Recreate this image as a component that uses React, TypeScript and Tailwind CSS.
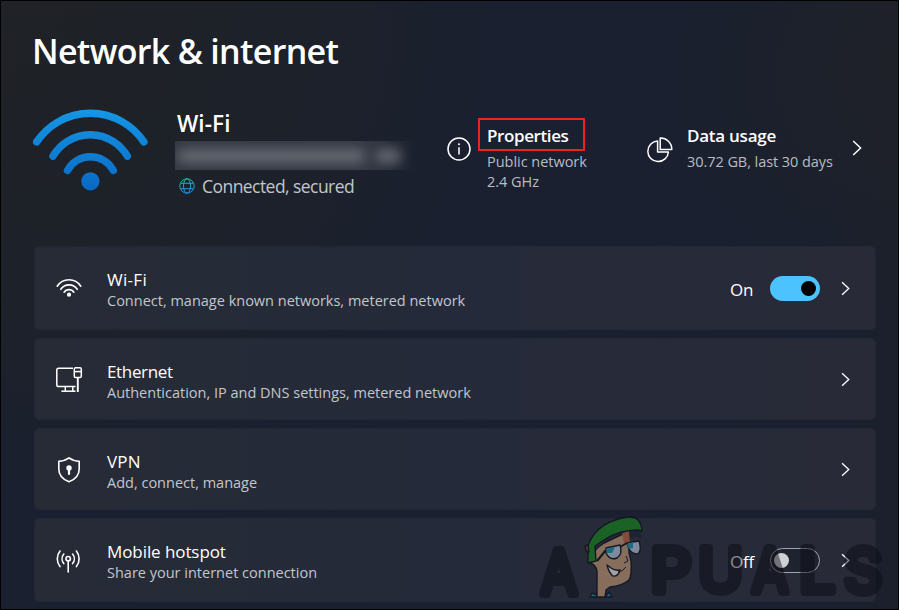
import React from "react";

const Chevron = ({ className = "" }: { className?: string }) => (
  <svg viewBox="0 0 10 16" className={className} fill="none" stroke="#fff" strokeWidth="1.5">
    <path d="M1.2 1 L8.6 8 L1.2 15" />
  </svg>
);

const BigWifi = () => (
  <svg width="116" height="82" viewBox="0 0 116 82" className="shrink-0">
    <defs>
      <linearGradient id="sky" gradientUnits="userSpaceOnUse" x1="0" y1="0" x2="0" y2="82">
        <stop offset="0" stopColor="#1597e5" />
        <stop offset="1" stopColor="#0968c3" />
      </linearGradient>
    </defs>
    <g fill="none" stroke="url(#sky)" strokeWidth="7.4" strokeLinecap="round">
      <path d="M3.7 32.9 A64.5 64.5 0 0 1 110.9 32.9" />
      <path d="M20 47.2 A43 43 0 0 1 94.4 47.2" />
      <path d="M34.5 61.4 A26 26 0 0 1 80.3 61.4" />
    </g>
    <circle cx="57.4" cy="72.3" r="9.1" fill="url(#sky)" />
  </svg>
);

const Globe = () => (
  <svg width="16" height="16" viewBox="0 0 16 16" fill="none" stroke="url(#globe)" strokeWidth="1">
    <defs>
      <linearGradient id="globe" gradientUnits="userSpaceOnUse" x1="0" y1="0" x2="3" y2="16">
        <stop offset="0" stopColor="#1fbf9c" />
        <stop offset="1" stopColor="#2191e6" />
      </linearGradient>
    </defs>
    <circle cx="8" cy="8" r="7.2" />
    <ellipse cx="8" cy="8" rx="3.5" ry="7.2" />
    <path d="M1.6 5.3 H14.4 M1.6 10.7 H14.4" />
  </svg>
);

const InfoIcon = () => (
  <svg width="24" height="24" viewBox="0 0 24 24" fill="none" stroke="#fff" strokeWidth="1.5">
    <circle cx="12" cy="12" r="11" />
    <path d="M12 10.2 V17.5" />
    <circle cx="12" cy="7.3" r="1" fill="#fff" stroke="none" />
  </svg>
);

const PieIcon = () => (
  <svg width="26" height="26" viewBox="0 0 26 26" fill="none" stroke="#fff" strokeWidth="1.5" strokeLinejoin="round">
    <path d="M10.6 4 A10.3 10.3 0 1 0 21.4 15 H10.6 Z" />
    <path d="M13.2 1 A11.2 11.2 0 0 1 24.8 12.4 H13.2 Z" />
  </svg>
);

const WifiIcon = () => (
  <svg width="28" height="28" viewBox="0 0 28 28" fill="none" stroke="#fff" strokeWidth="1.6" strokeLinecap="round">
    <path d="M2.2 12.2 A14 14 0 0 1 25.8 12.2" />
    <path d="M5.8 15.3 A9.8 9.8 0 0 1 22.2 15.3" />
    <path d="M9.1 18.2 A5.9 5.9 0 0 1 18.9 18.2" />
    <circle cx="14" cy="20.7" r="2.1" fill="#fff" stroke="none" />
  </svg>
);

const EthernetIcon = () => (
  <svg width="28" height="28" viewBox="0 0 28 28" fill="none" stroke="#fff" strokeWidth="1.5" strokeLinejoin="round">
    <path d="M18 2.2 H3.5 Q1.8 2.2 1.8 4 V18.8 Q1.8 20.6 3.5 20.6 H20.5" />
    <path d="M10.3 20.6 V25.2 M17.8 20.6 V25.2" />
    <path d="M6.4 25.2 H20.5" />
    <rect x="19.3" y="1.8" width="7" height="9.8" rx="1.4" />
    <path d="M19.5 5.6 H26.2" />
    <path d="M22.8 11.8 V26" strokeWidth="1.9" />
  </svg>
);

const ShieldIcon = () => (
  <svg width="28" height="28" viewBox="0 0 28 28" fill="none" stroke="#fff" strokeWidth="1.6" strokeLinejoin="round">
    <path d="M14 1.8 C11 4 7.5 5 3.8 5.2 V13 C3.8 19 7.5 23.3 14 25.8 C20.5 23.3 24.2 19 24.2 13 V5.2 C20.5 5 17 4 14 1.8 Z" />
    <circle cx="14" cy="12" r="2.7" fill="#fff" stroke="none" />
    <path d="M14 12.5 V18" strokeWidth="2.2" strokeLinecap="round" />
  </svg>
);

const HotspotIcon = () => (
  <svg width="28" height="28" viewBox="0 0 28 28" fill="none" stroke="#fff" strokeWidth="1.6" strokeLinecap="round">
    <g transform="translate(0 2)">
      <path d="M5 3 A12.6 12.6 0 0 0 5 18.6 M21.4 3 A12.6 12.6 0 0 1 21.4 18.6" />
      <path d="M8.8 6 A7.6 7.6 0 0 0 8.8 15.6 M17.6 6 A7.6 7.6 0 0 1 17.6 15.6" />
      <circle cx="13.2" cy="10.7" r="2.2" />
      <path d="M13.2 13 V24" />
    </g>
  </svg>
);

const Brand = () => (
  <svg width="350" height="84" viewBox="536 514 350 84" className="pointer-events-none absolute left-[535px] top-[513px] overflow-visible">
    <g opacity="0.47">
      <g
        fill="#080b12"
        stroke="#080b12"
        strokeWidth="8"
        strokeLinejoin="round"
        fontFamily="Inter, sans-serif"
        fontSize="60"
        fontWeight="400"
      >
        <text x="541" y="593.5" textLength="36" lengthAdjust="spacingAndGlyphs">A</text>
        <text x="650.5" y="592" textLength="41" lengthAdjust="spacingAndGlyphs">P</text>
        <text x="698" y="592" textLength="45" lengthAdjust="spacingAndGlyphs">U</text>
        <text x="752" y="592" textLength="36" lengthAdjust="spacingAndGlyphs">A</text>
        <text x="799" y="592" textLength="36" lengthAdjust="spacingAndGlyphs">L</text>
        <text x="844" y="592" textLength="38" lengthAdjust="spacingAndGlyphs">S</text>
      </g>
    </g>
    <g opacity="0.75" stroke="#10131d" strokeWidth="1.4" strokeLinejoin="round">
      <path d="M590 597 L592 593 L597 595 V597 Z M605 597 L609 592 L612 597 Z" fill="#087c9c" />
      <path d="M597 597 V571 Q596 565 590 563 Q590 552 604 543 L629 531 V553 L631 561 Q632 575 629 580 Q622 586 610 587 L606 590 L605 597 Z" fill="#a88467" />
      <path d="M622 533 L629 531 L630 542 L624 543 Z" fill="#a0583a" stroke="none" />
      <path d="M630 531 L638 530 L641 531 Q642 536 641 539 Q637 534 630 539 Z" fill="#1a2036" stroke="none" />
      <path d="M588 546 L590 541 Q600 521 628 517 Q641 516 642 531 L638 530 Q619 530 604 540 L595 546 L596 561 L588 563 Z" fill="#17751f" />
      <path d="M585 546 L588 545 L589 552 L586 551 Z" fill="#8d3038" />
      <path d="M597 561 L606 550 M620 547 L627 543" fill="none" strokeWidth="2" />
      <path d="M606 548 L620 545 Q623 554 617 558 Q610 561 606 553 Z" fill="#9dabc1" />
      <path d="M627 543 L639 541 Q642 550 638 554 Q632 554 629 549 Z" fill="#9dabc1" />
      <path d="M606 549 L615 547 L612 553 H607 Z M627 544 L633 542 L633 548 L629 549 Z" fill="#15859e" stroke="none" />
      <path d="M607 565 L611 568 Q615 571 620 570 Q618 577 613 576 Q609 573 607 565 Z" fill="#d0c8c6" />
      <path d="M626 556 L628 561 L624 563 M626 567 Q622 572 618 572" fill="none" strokeWidth="1" />
    </g>
  </svg>
);

type RowProps = {
  icon: React.ReactNode;
  title: string;
  titleSpacing: string;
  sub: string;
  size: string;
  toggle?: "on" | "off";
};

const Row = ({ icon, title, titleSpacing, sub, size, toggle }: RowProps) => (
  <div className={`flex items-center rounded-[5px] border border-[#222736] bg-linear-to-r from-[#262b36] via-[#252a3a] to-[#282a37] pl-[20px] pr-[25px] ${size}`}>
    <div className="w-[52px] shrink-0">{icon}</div>
    <div className="grow whitespace-nowrap pt-[4px]">
      <div className={`text-[17px] leading-[22px] text-white ${titleSpacing}`}>{title}</div>
      <div className="text-[14.5px] leading-[20px] text-[#c3c6cc]">{sub}</div>
    </div>
    {toggle && (
      <>
        <div className="mt-[3px] w-[40px] text-[17px] leading-[22px] tracking-[-0.2px] text-white">
          {toggle === "on" ? "On" : "Off"}
        </div>
        {toggle === "on" ? (
          <div className="flex h-[25px] w-[50px] items-center justify-end rounded-full bg-[#4cc2ff] pr-[4px]">
            <div className="size-[15px] rounded-full bg-black" />
          </div>
        ) : (
          <div className="flex h-[25px] w-[50px] items-center rounded-full border border-[#a2a5ab] bg-[#1b1f2c]/60 pl-[3px]">
            <div className="size-[15px] rounded-full bg-[#d0d1d4]" />
          </div>
        )}
      </>
    )}
    <Chevron className={`ml-[21px] h-[15px] w-[9px] ${toggle ? "" : "-mt-[2px]"}`} />
  </div>
);

export default function App() {
  return (
    <div className="relative h-[610px] w-[899px] overflow-hidden border border-black bg-[#1a2030] bg-[radial-gradient(circle_at_0%_0%,#1f2226_0%,#1d2129_25%,transparent_48%),radial-gradient(circle_at_100%_12%,#1e2128_0%,transparent_24%),linear-gradient(90deg,transparent_92%,#1c202b_100%)] font-['Open_Sans',sans-serif] text-white">
      <div className="px-[31px] pt-[27px]">
        <h1 className="h-[46px] whitespace-nowrap text-[34px] font-semibold leading-[46px] tracking-[-0.68px]">
          Network &amp; internet
        </h1>
      </div>

      <div className="flex h-[172px] pl-[32px] pt-[35px]">
        <BigWifi />
        <div className="ml-[26px] w-[272px] whitespace-nowrap">
          <div className="h-[31px] pl-[2px] text-[22.5px] font-semibold leading-[29px] tracking-[0.1px]">Wi-Fi</div>
          <div className="mt-[1px] flex h-[29px] w-[240px] items-center overflow-hidden bg-[linear-gradient(90deg,#343842,#353944_80%,transparent)]">
            <div className="ml-[2px] h-[14px] w-[188px] shrink-0 rounded-full bg-[#656972] blur-[6px]" />
            <div className="ml-[10px] h-[14px] w-[26px] shrink-0 rounded-full bg-[#656972] blur-[6px]" />
          </div>
          <div className="mt-[4px] flex items-center gap-[7px] pl-[4px]">
            <Globe />
            <span className="text-[17.5px] leading-[24px] tracking-[-0.55px] text-[#c3c6cc]">Connected, secured</span>
          </div>
        </div>

        <div className="flex w-[200px] whitespace-nowrap">
          <div className="w-[31px] shrink-0 pt-[28px]"><InfoIcon /></div>
          <div>
            <div className="mt-[9px] h-[33px] w-[107px] border-2 border-[#f02024] pl-[7px] text-[17px] font-semibold leading-[31px] tracking-[-0.4px]">
              Properties
            </div>
            <div className="pl-[9px] pt-[1px] text-[14.5px] leading-[20px] tracking-[-0.03px] text-[#b9bcc4]">
              <div>Public network</div>
              <div>2.4 GHz</div>
            </div>
          </div>
        </div>

        <div className="flex grow whitespace-nowrap">
          <div className="w-[40px] shrink-0 pt-[28px]"><PieIcon /></div>
          <div className="w-[165px] pt-[14px]">
            <div className="text-[17px] font-semibold leading-[25px] tracking-[-0.25px]">Data usage</div>
            <div className="pt-[4px] text-[14.5px] leading-[20px] tracking-[-0.06px] text-[#b9bcc4]">30.72 GB, last 30 days</div>
          </div>
          <Chevron className="mt-[31px] h-[16px] w-[10px]" />
        </div>
      </div>

      <div className="ml-[33px] flex w-[842px] flex-col gap-[8px]">
        <Row icon={<WifiIcon />} size="h-[84px]" title="Wi-Fi" titleSpacing="tracking-[0.3px]" sub="Connect, manage known networks, metered network" toggle="on" />
        <Row icon={<EthernetIcon />} size="h-[82px] pt-[2px]" title="Ethernet" titleSpacing="tracking-[-0.35px]" sub="Authentication, IP and DNS settings, metered network" />
        <Row icon={<ShieldIcon />} size="h-[82px] pt-[2px]" title="VPN" titleSpacing="tracking-[0.2px]" sub="Add, connect, manage" />
        <Row icon={<HotspotIcon />} size="h-[84px]" title="Mobile hotspot" titleSpacing="tracking-[-0.08px]" sub="Share your internet connection" toggle="off" />
      </div>
      <Brand />
    </div>
  );
}
